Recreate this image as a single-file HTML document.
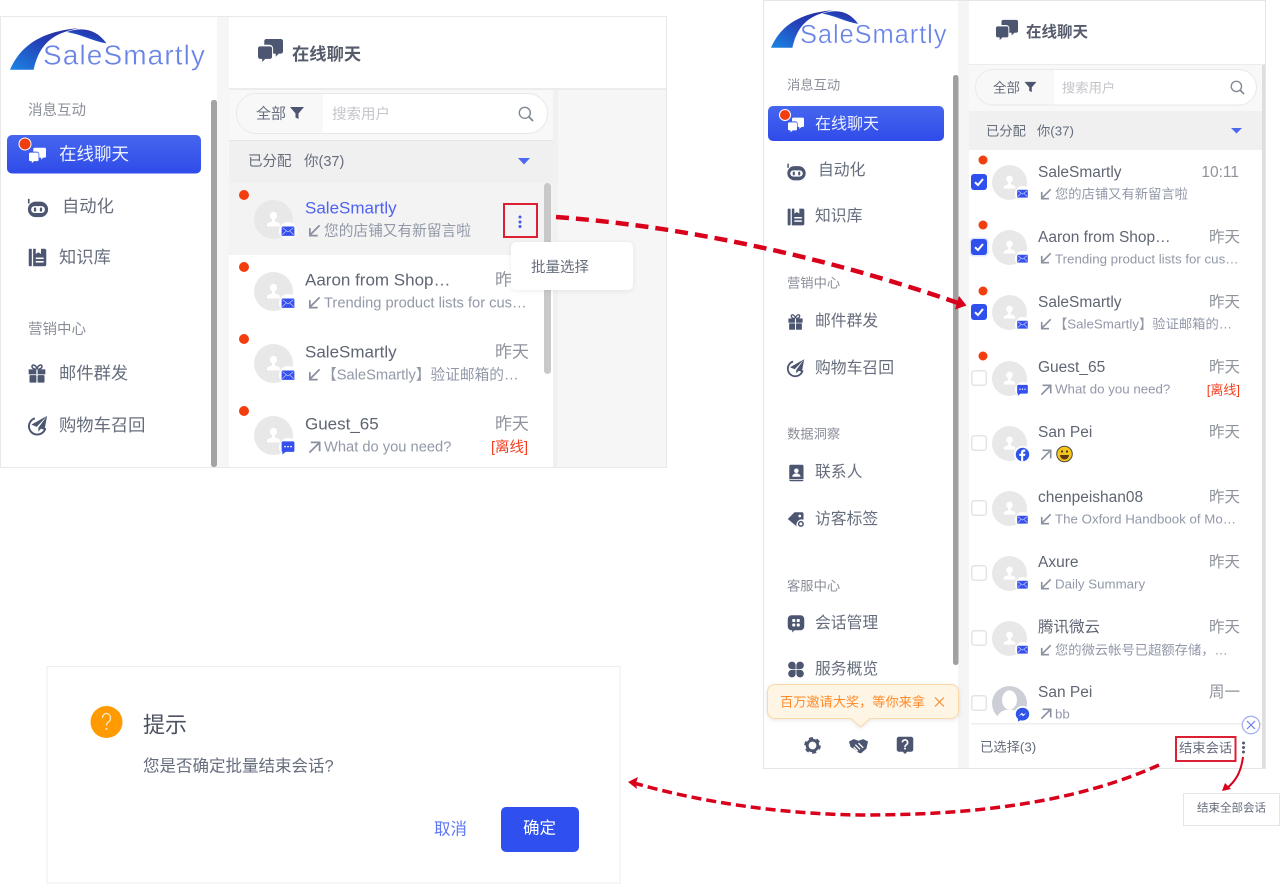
<!DOCTYPE html>
<html lang="zh-CN">
<head>
<meta charset="utf-8">
<title>SaleSmartly</title>
<style>
html,body{margin:0;padding:0;background:#fff}
#p{position:relative;width:1280px;height:884px;overflow:hidden;background:#fff;font-family:"Liberation Sans","Noto Sans CJK SC",sans-serif;color:#5d6472;filter:blur(.3px)}
#g{position:absolute;left:0;top:0}
.t{position:absolute;white-space:nowrap;line-height:1.2;transform:translateY(calc(-50% + 1.5px))}
.r{transform:translate(-100%,calc(-50% + 1.5px))}
.h{color:#8b8f99}
.m{color:#666d7c}
.n{color:#5f6572}
.s{color:#9298a8}
.d{color:#8f939c}
.a{font-size:15.5px}
.b{font-size:17.3px}
.c{font-size:13.3px}
.e{font-size:14.7px}
.o{color:#f23d1f}
.lg{color:#6a84e6;-webkit-text-stroke:.35px #fff}
.pop{position:absolute;background:#fff;border-radius:5px;box-shadow:0 1px 6px rgba(0,0,0,.08)}
</style>
</head>
<body>
<div id="p">
<svg id="g" width="1280" height="884" viewBox="0 0 1280 884" xmlns="http://www.w3.org/2000/svg">
<defs>
<linearGradient id="ar" x1="0" y1="1" x2="1" y2="0"><stop offset="0" stop-color="#1b86e4"/><stop offset=".55" stop-color="#2440b8"/><stop offset="1" stop-color="#2a2a9c"/></linearGradient>
<linearGradient id="ac" x1="0" y1="0" x2="0" y2="1"><stop offset="0" stop-color="#4666ee"/><stop offset="1" stop-color="#2f4be9"/></linearGradient>
<symbol id="logo" viewBox="0 0 110 48"><path fill="url(#ar)" d="M0 46C8 28 24 6 72 2 50 7 32 14 25 46z"/><path fill="url(#ar)" d="M60 6C78 0 92 4 102 18 88 16 74 8 60 6z"/></symbol>
<symbol id="chat" viewBox="0 0 24 24"><path d="M8 1h14a2 2 0 0 1 2 2v10a2 2 0 0 1-2 2h-2l-3 3v-3h-2.500v-5a3.500 3.500 0 0 0-3.500-3.500H6V3a2 2 0 0 1 2-2z"/><path d="M2 8h9.500a2 2 0 0 1 2 2v8a2 2 0 0 1-2 2H7l-3 3v-3H2a2 2 0 0 1-2-2v-8a2 2 0 0 1 2-2z"/></symbol>
<symbol id="robot" viewBox="0 0 24 24"><rect x="1" y="5" width="22" height="17" rx="8.500"/><rect x="4.500" y="10" width="15" height="7.500" rx="3.700" fill="#fff"/><rect x="7.500" y="11.500" width="2.500" height="4.500" rx="1"/><rect x="14" y="11.500" width="2.500" height="4.500" rx="1"/><rect x="1" y="2" width="1.800" height="5"/></symbol>
<symbol id="book" viewBox="0 0 24 24"><rect x="2" y="2" width="3.500" height="20" rx="1"/><path d="M7 2h3v6l3-2 3 2V2h4a2 2 0 0 1 2 2v16a2 2 0 0 1-2 2H7z"/><rect x="10" y="12" width="9" height="1.800" fill="#fff"/><rect x="10" y="16" width="9" height="1.800" fill="#fff"/></symbol>
<symbol id="gift" viewBox="0 0 24 24"><rect x="2" y="7" width="20" height="6"/><rect x="3" y="14" width="8.300" height="9" rx="1"/><rect x="12.700" y="14" width="8.300" height="9" rx="1"/><path d="M12 7C9 7 6 6 6 3.500S10 1 12 6c2-5 6-5 6-2.500S15 7 12 7z" fill="none" stroke="currentColor" stroke-width="1.800"/><rect x="11.200" y="7" width="1.600" height="6" fill="#fff"/></symbol>
<symbol id="plane" viewBox="0 0 24 24"><path d="M21 15A9.500 9.500 0 1 1 9 3.800" fill="none" stroke="currentColor" stroke-width="2.200"/><path d="M23 1 5 11l6 2.500L23 1zM23 1 13 14.500v4.500l3-3.500 4 1.500z"/></symbol>
<symbol id="contact" viewBox="0 0 24 24"><path d="M5 1h15a2 2 0 0 1 2 2v18a2 2 0 0 1-2 2H5a2 2 0 0 1-2-2V3a2 2 0 0 1 2-2z"/><circle cx="12.500" cy="9" r="3" fill="#fff"/><path d="M7 17c0-6 11-6 11 0z" fill="#fff"/><rect x="3" y="20" width="19" height="1" fill="#fff"/></symbol>
<symbol id="tag" viewBox="0 0 24 24"><path d="M1 12 10 3h10a2 2 0 0 1 2 2v8a7 7 0 0 0-9 9z"/><circle cx="17" cy="8" r="1.800" fill="#fff"/><circle cx="18.500" cy="18.500" r="3" fill="none" stroke="currentColor" stroke-width="2"/></symbol>
<symbol id="dlg" viewBox="0 0 24 24"><path d="M6 1h12a5 5 0 0 1 5 5v10a5 5 0 0 1-5 5h-8l-3 3v-3H6a5 5 0 0 1-5-5V6a5 5 0 0 1 5-5z"/><rect x="7" y="6" width="4" height="4" rx="1" fill="#fff"/><rect x="13" y="6" width="4" height="4" rx="1" fill="#fff"/><rect x="7" y="12" width="4" height="4" rx="1" fill="#fff"/><rect x="13" y="12" width="4" height="4" rx="1" fill="#fff"/></symbol>
<symbol id="clover" viewBox="0 0 24 24"><path d="M6.500 1.500c3 0 5 2 5 5v5h-5a5 5 0 0 1 0-10zM17.500 1.500a5 5 0 0 1 0 10h-5v-5c0-3 2-5 5-5zM6.500 22.500a5 5 0 0 1 0-10h5v5c0 3-2 5-5 5zM17.500 22.500c-3 0-5-2-5-5v-5h5a5 5 0 0 1 0 10z"/></symbol>
<symbol id="gear" viewBox="0 0 24 24"><circle cx="12" cy="12" r="7.500" fill="none" stroke="currentColor" stroke-width="4"/><circle cx="12" cy="12" r="10" fill="none" stroke="currentColor" stroke-width="3.500" stroke-dasharray="5.500 5"/></symbol>
<symbol id="hand" viewBox="0 0 24 24"><path d="M0 7l6-3 6 2 6-2 6 3-2 9-7 6-3-1-6-5-4-2z"/><path d="M8 11l6 6M6 14l5 5M12 9l6 6" stroke="#fff" stroke-width="1.600" fill="none"/></symbol>
<symbol id="ques" viewBox="0 0 24 24"><path d="M4 1h16a3 3 0 0 1 3 3v14a3 3 0 0 1-3 3h-5l-3 3-3-3H4a3 3 0 0 1-3-3V4a3 3 0 0 1 3-3z"/><path d="M8.500 8.500a3.500 3.500 0 1 1 5.500 3c-1.500 1-2 1.500-2 3" fill="none" stroke="#fff" stroke-width="2.200"/><rect x="10.800" y="15.500" width="2.400" height="2.400" fill="#fff"/></symbol>
<symbol id="av" viewBox="0 0 40 40"><circle cx="20" cy="20" r="20" fill="#e8e8e8"/><circle cx="20" cy="16" r="3.800" fill="#fff"/><path d="M18.500 19h3v3l5 2v3h-13v-3l5-2z" fill="#fff"/></symbol>
<symbol id="av2" viewBox="0 0 40 40"><circle cx="20" cy="20" r="20" fill="#ccd0d6"/><ellipse cx="20" cy="16" rx="8.500" ry="11" fill="#fff"/><path d="M5 40c1-10 8-13 15-13s14 3 15 13z" fill="#fff"/></symbol>
<symbol id="mail" viewBox="0 0 24 24"><circle cx="12" cy="12" r="12" fill="#fff"/><rect x="3.500" y="6" width="17" height="12.500" rx="1" fill="#3550ee"/><path d="M4.500 7.500 12 13l7.500-5.500M4.500 17l5-5M19.500 17l-5-5" stroke="#fff" stroke-width="1" stroke-opacity=".7" fill="none"/></symbol>
<symbol id="msg" viewBox="0 0 24 24"><circle cx="12" cy="12" r="12" fill="#fff"/><path d="M5 4.500h14a1.500 1.500 0 0 1 1.500 1.500v11a1.500 1.500 0 0 1-1.500 1.500H9l-4.500 3.500v-3.500a1.500 1.500 0 0 1-1-1.500V6A1.500 1.500 0 0 1 5 4.500z" fill="#3550ee"/><circle cx="8" cy="11.500" r="1.100" fill="#fff"/><circle cx="12" cy="11.500" r="1.100" fill="#fff"/><circle cx="16" cy="11.500" r="1.100" fill="#fff"/></symbol>
<symbol id="fb" viewBox="0 0 24 24"><circle cx="12" cy="12" r="12" fill="#fff"/><circle cx="12" cy="12" r="9.500" fill="#2f55e8"/><path d="M13 21.500V14h2.600l.4-3h-3V9.500c0-1 .4-1.500 1.500-1.500H16V5.300c-3.500-.6-6 .3-6 3.900V11H7.500v3H10v7.500z" fill="#fff"/></symbol>
<symbol id="mes" viewBox="0 0 24 24"><circle cx="12" cy="12" r="12" fill="#fff"/><path d="M12 2.500c-5.500 0-9.500 4-9.500 9 0 2.800 1.200 5 3.200 6.700V22l3.300-1.900c1 .3 2 .4 3 .4 5.500 0 9.500-4 9.500-9s-4-9-9.500-9z" fill="#2f55e8"/><path d="M6.500 14.500 11 9.500l2.500 2.500 4-2.500-4.500 5-2.500-2.500z" fill="#fff"/></symbol>
<symbol id="in" viewBox="0 0 14 14"><path d="M12.500 1.500 2 12M2 4.500V12.500H10.500" fill="none" stroke="currentColor" stroke-width="1.900"/></symbol>
<symbol id="out" viewBox="0 0 14 14"><path d="M1.500 12.500 12 2M3 1.500H12.500V11" fill="none" stroke="currentColor" stroke-width="1.900"/></symbol>
<symbol id="chk" viewBox="0 0 16 16"><rect width="16" height="16" rx="3" fill="#3050ee"/><path d="M4 8.300 7 11l5-6" fill="none" stroke="#fff" stroke-width="2"/></symbol>
<symbol id="unc" viewBox="0 0 16 16"><rect x=".75" y=".75" width="14.500" height="14.500" rx="2.500" fill="#fff" stroke="#e4e4e4" stroke-width="1.500"/></symbol>
<symbol id="fun" viewBox="0 0 14 14"><path d="M0 1h14L8.500 7.500V13l-3-1.500v-4z"/></symbol>
<symbol id="mag" viewBox="0 0 16 16"><circle cx="6.800" cy="6.800" r="5.500" fill="none" stroke="currentColor" stroke-width="1.400"/><path d="m10.800 10.800 4.200 4.200" stroke="currentColor" stroke-width="1.800"/></symbol>
</defs>

<!-- LEFT PANEL -->
<rect x="0.500" y="16.500" width="666" height="451" fill="#f6f6f6" stroke="#e9e9e9"/>
<rect x="1" y="17" width="216" height="450" fill="#fff"/>
<rect x="211" y="100" width="6" height="367" rx="2.500" fill="#a3a3a3"/>
<rect x="229" y="17" width="437" height="71" fill="#fff"/>
<rect x="229" y="88" width="437" height="2" fill="#ececec"/>
<rect x="229" y="90" width="324" height="377" fill="#fff"/>
<rect x="229" y="90" width="324" height="50" fill="#f8f8f8"/>
<rect x="236.500" y="93.500" width="311" height="40" rx="20" fill="#fff" stroke="#e8e8e8"/>
<path d="M323 94H256.500a19.500 19.500 0 0 0 0 39H323z" fill="#f8f8f8"/>
<rect x="229" y="140" width="324" height="1" fill="#e6e6e6"/>
<rect x="229" y="141" width="324" height="42" fill="#f0f0f0"/>
<rect x="229" y="183" width="324" height="72" fill="#f3f3f3"/>
<rect x="553" y="90" width="5" height="377" fill="#f1f1f1"/>
<rect x="544" y="183" width="7" height="191" rx="3.500" fill="#c9c9c9"/>
<use href="#logo" x="10" y="26" width="104" height="46"/>
<rect x="7" y="135" width="194" height="38.500" rx="5" fill="url(#ac)"/>
<use href="#chat" x="28" y="147" width="19" height="17" fill="#fff" color="#fff"/>
<circle cx="25" cy="144" r="6.500" fill="#fff"/><circle cx="25" cy="144" r="5.500" fill="#f23d0f"/>
<g fill="#4d5670" color="#4d5670">
<use href="#robot" x="27" y="197" width="22" height="22"/>
<use href="#book" x="27" y="247" width="21" height="21"/>
<use href="#gift" x="27" y="363" width="20" height="21"/>
<use href="#plane" x="27" y="415" width="21" height="21"/>
<use href="#chat" x="257" y="38" width="27" height="25"/>
<use href="#fun" x="290" y="106" width="14" height="14"/>
</g>
<use href="#mag" x="518" y="106" width="16" height="16" color="#7f8794"/>
<path d="M518 158h12l-6 6.500z" fill="#4c68f0"/>
<g fill="#f23d0f"><circle cx="244" cy="195" r="5"/><circle cx="244" cy="267" r="5"/><circle cx="244" cy="339" r="5"/><circle cx="244" cy="411" r="5"/></g>
<use href="#av" x="254" y="200" width="39" height="39"/>
<use href="#av" x="254" y="272" width="39" height="39"/>
<use href="#av" x="254" y="344" width="39" height="39"/>
<use href="#av" x="254" y="416" width="39" height="39"/>
<use href="#mail" x="279" y="222" width="18" height="18"/>
<use href="#mail" x="279" y="294" width="18" height="18"/>
<use href="#mail" x="279" y="366" width="18" height="18"/>
<use href="#msg" x="279" y="438" width="18" height="18"/>
<g color="#8a90a0">
<use href="#in" x="308" y="224" width="13" height="13"/>
<use href="#in" x="308" y="296" width="13" height="13"/>
<use href="#in" x="308" y="368" width="13" height="13"/>
<use href="#out" x="308" y="441" width="13" height="13"/>
</g>
<rect x="504" y="204" width="33" height="33" fill="none" stroke="#dc1f33" stroke-width="2"/>
<g fill="#3f59ee"><circle cx="520" cy="217" r="1.500"/><circle cx="520" cy="222" r="1.500"/><circle cx="520" cy="226.500" r="1.500"/></g>

<!-- RIGHT PANEL -->
<rect x="763.500" y="0.500" width="502" height="768" fill="#f5f5f5" stroke="#e6e6e6"/>
<rect x="764" y="1" width="194" height="767" fill="#fff"/>
<rect x="953" y="75" width="5.500" height="590" rx="2.500" fill="#a0a0a0"/>
<rect x="969" y="1" width="296" height="63" fill="#fff"/>
<rect x="969" y="64" width="296" height="1.500" fill="#ececec"/>
<rect x="969" y="65" width="293" height="703" fill="#fff"/>
<rect x="1262" y="65" width="3" height="703" fill="#dedede"/>
<rect x="969" y="65" width="293" height="46" fill="#f8f8f8"/>
<rect x="975.500" y="69.500" width="281" height="35.500" rx="17.700" fill="#fff" stroke="#e8e8e8"/>
<path d="M1054 70H993a17 17 0 0 0 0 34.500h61z" fill="#f8f8f8"/>
<rect x="969" y="111" width="293" height="39" fill="#f0f0f0"/>
<use href="#logo" x="771" y="8" width="94" height="42"/>
<rect x="768" y="106" width="176" height="35" rx="5" fill="url(#ac)"/>
<use href="#chat" x="787" y="117" width="18" height="16" fill="#fff" color="#fff"/>
<circle cx="785" cy="115" r="6" fill="#fff"/><circle cx="785" cy="115" r="5" fill="#f23d0f"/>
<g fill="#4d5670" color="#4d5670">
<use href="#robot" x="786" y="162" width="21" height="20"/>
<use href="#book" x="786" y="207" width="20" height="20"/>
<use href="#gift" x="787" y="313" width="17" height="18"/>
<use href="#plane" x="786" y="358" width="19" height="20"/>
<use href="#contact" x="787" y="463" width="18" height="20"/>
<use href="#tag" x="787" y="510" width="18" height="18"/>
<use href="#dlg" x="787" y="614" width="18" height="19"/>
<use href="#clover" x="787" y="660" width="18" height="19"/>
<use href="#gear" x="804" y="737" width="17" height="17"/>
<use href="#hand" x="848" y="736" width="21" height="19"/>
<use href="#ques" x="896" y="736" width="18" height="18"/>
<use href="#chat" x="995" y="19" width="24" height="22"/>
<use href="#fun" x="1024" y="81" width="13" height="12"/>
</g>
<use href="#mag" x="1230" y="80" width="15" height="15" color="#7f8794"/>
<path d="M1231 128h11l-5.500 5.500z" fill="#4c68f0"/>
<g fill="#f23d0f"><circle cx="983" cy="160" r="4.500"/><circle cx="983" cy="225" r="4.500"/><circle cx="983" cy="291" r="4.500"/><circle cx="983" cy="356" r="4.500"/></g>
<use href="#chk" x="971" y="174" width="16" height="16"/>
<rect x="969.500" y="237.500" width="19" height="19" rx="4" fill="#dfe4ff"/>
<use href="#chk" x="971" y="239" width="16" height="16"/>
<use href="#chk" x="971" y="304" width="16" height="16"/>
<use href="#unc" x="971" y="370" width="16" height="16"/>
<use href="#unc" x="971" y="435" width="16" height="16"/>
<use href="#unc" x="971" y="500" width="16" height="16"/>
<use href="#unc" x="971" y="565" width="16" height="16"/>
<use href="#unc" x="971" y="630" width="16" height="16"/>
<use href="#unc" x="971" y="695" width="16" height="16"/>
<use href="#av" x="992" y="165" width="35" height="35"/>
<use href="#av" x="992" y="230" width="35" height="35"/>
<use href="#av" x="992" y="295" width="35" height="35"/>
<use href="#av" x="992" y="361" width="35" height="35"/>
<use href="#av" x="992" y="426" width="35" height="35"/>
<use href="#av" x="992" y="491" width="35" height="35"/>
<use href="#av" x="992" y="556" width="35" height="35"/>
<use href="#av" x="992" y="621" width="35" height="35"/>
<use href="#av2" x="992" y="686" width="35" height="35"/>
<use href="#mail" x="1015" y="186" width="15" height="15"/>
<use href="#mail" x="1015" y="251" width="15" height="15"/>
<use href="#mail" x="1015" y="317" width="15" height="15"/>
<use href="#msg" x="1015" y="382" width="15" height="15"/>
<use href="#fb" x="1014" y="446" width="17" height="17"/>
<use href="#mail" x="1015" y="512" width="15" height="15"/>
<use href="#mail" x="1015" y="577" width="15" height="15"/>
<use href="#mail" x="1015" y="642" width="15" height="15"/>
<use href="#mes" x="1014" y="706" width="17" height="17"/>
<g color="#8a90a0">
<use href="#in" x="1040" y="188" width="12" height="12"/>
<use href="#in" x="1040" y="252" width="12" height="12"/>
<use href="#in" x="1040" y="318" width="12" height="12"/>
<use href="#out" x="1040" y="384" width="12" height="12"/>
<use href="#out" x="1040" y="449" width="12" height="12"/>
<use href="#in" x="1040" y="513" width="12" height="12"/>
<use href="#in" x="1040" y="578" width="12" height="12"/>
<use href="#in" x="1040" y="644" width="12" height="12"/>
<use href="#out" x="1040" y="708" width="12" height="12"/>
</g>
<circle cx="1064.500" cy="454" r="7.800" fill="#f5c518" stroke="#4a4a4a" stroke-width="1"/>
<circle cx="1062" cy="451.500" r="1.100" fill="#333"/><circle cx="1067" cy="451.500" r="1.100" fill="#333"/>
<path d="M1060 455h9a4.500 4.500 0 0 1-9 0z" fill="#5a3a1a"/>
<rect x="969" y="724" width="293" height="44" fill="#fff"/>
<rect x="971" y="723" width="291" height="1.500" fill="#eeeeee"/>
<rect x="1176" y="737" width="59.500" height="24" fill="none" stroke="#dc1f33" stroke-width="2"/>
<g fill="#555c6e"><circle cx="1243.500" cy="743" r="1.500"/><circle cx="1243.500" cy="747.500" r="1.500"/><circle cx="1243.500" cy="752" r="1.500"/></g>
<circle cx="1251" cy="725" r="8.700" fill="#fff" stroke="#a9b2f3" stroke-width="1.300"/>
<path d="m1247 721 8 8m0-8-8 8" stroke="#6d7eee" stroke-width="1.200"/>
<!-- tip -->
<path d="M775 684.500h176a7.500 7.500 0 0 1 7.500 7.500v19a7.500 7.500 0 0 1-7.500 7.500H870l-9.500 8.500-9.500-8.500H775a7.500 7.500 0 0 1-7.500-7.500v-19a7.500 7.500 0 0 1 7.500-7.500z" fill="#fff5e4" stroke="#fbd8a8" style="filter:drop-shadow(0 1px 2px rgba(0,0,0,.1))"/>
<path d="m935 697.500 9 9m0-9-9 9" stroke="#f58d33" stroke-width="1.200"/>
<!-- outside popup -->
<rect x="1183.500" y="793.500" width="96" height="32" fill="#fff" stroke="#e6e6e6"/>
<!-- dialog -->
<rect x="47" y="666.500" width="573" height="216.500" fill="#fff" stroke="#eeeeee"/>
<circle cx="106.500" cy="722" r="16" fill="#ff9b00"/>
<path d="M102.500 718a4 4.500 0 1 1 6.500 3.500c-1.600 1.300-2.500 2-2.500 4" fill="none" stroke="#ffe9c6" stroke-width="1.300"/>
<circle cx="106.500" cy="729" r="1" fill="#ffe9c6"/>
<rect x="501" y="807" width="78" height="45" rx="5" fill="#2f50ef"/>
<!-- arrows -->
<path d="M556 217C680 226 820 255 958 303" fill="none" stroke="#d9001b" stroke-width="4.500" stroke-dasharray="13 7"/>
<path d="M966.500 305.500 955 309.500 959 296z" fill="#d9001b"/>
<path d="M1159 765C1060 810 940 815 860 815 780 814 700 802 634 783" fill="none" stroke="#d9001b" stroke-width="3.500" stroke-dasharray="10 5"/>
<path d="M628 782 638 777 636 783 637 789z" fill="#d9001b"/>
<path d="M1243 757C1241 772 1236 781 1226 789" fill="none" stroke="#d9001b" stroke-width="2"/>
<path d="M1222 791 1225 783 1231 789z" fill="#d9001b"/>
</svg>

<!-- left text -->
<div class="t lg" style="left:43px;top:54px;font-size:28px;letter-spacing:1.100px">SaleSmartly</div>
<div class="t h" style="left:28px;top:110px;font-size:14.500px">消息互动</div>
<div class="t" style="left:59px;top:153px;font-size:17.500px;color:#eef1ff">在线聊天</div>
<div class="t m" style="left:62px;top:205px;font-size:17.300px">自动化</div>
<div class="t m" style="left:59px;top:256px;font-size:17.300px">知识库</div>
<div class="t h" style="left:28px;top:329px;font-size:14.500px">营销中心</div>
<div class="t m" style="left:59px;top:372px;font-size:17.300px">邮件群发</div>
<div class="t m" style="left:59px;top:424px;font-size:17.300px">购物车召回</div>
<div class="t" style="left:292px;top:53px;font-size:17.300px;font-weight:bold;color:#555b6b">在线聊天</div>
<div class="t m" style="left:256px;top:113px;font-size:15px">全部</div>
<div class="t" style="left:332px;top:114px;font-size:14.500px;color:#c3c5ca">搜索用户</div>
<div class="t m" style="left:248px;top:161px;font-size:14.500px">已分配</div>
<div class="t m" style="left:304px;top:161px;font-size:14.500px">你(37)</div>
<div class="t b" style="left:305px;top:207px;font-size:17px;color:#4f62f0">SaleSmartly</div>
<div class="t e s" style="left:324px;top:231px">您的店铺又有新留言啦</div>
<div class="t b n" style="left:305px;top:279px;font-size:17px">Aaron from Shop…</div>
<div class="t e s" style="left:324px;top:303px">Trending product lists for cus…</div>
<div class="t b n" style="left:305px;top:351px;font-size:17px">SaleSmartly</div>
<div class="t e s" style="left:322px;top:375px">【SaleSmartly】验证邮箱的…</div>
<div class="t b n" style="left:305px;top:423px;font-size:17px">Guest_65</div>
<div class="t e s" style="left:324px;top:447px">What do you need?</div>
<div class="t d" style="left:495px;top:279px;font-size:17px">昨天</div>
<div class="t d" style="left:495px;top:351px;font-size:17px">昨天</div>
<div class="t d" style="left:495px;top:423px;font-size:17px">昨天</div>
<div class="t o" style="left:491px;top:447px;font-size:14.500px">[离线]</div>
<div class="pop" style="left:511px;top:242px;width:122px;height:48px"></div>
<div class="t m" style="left:531px;top:267px;font-size:14.500px">批量选择</div>

<!-- right text -->
<div class="t lg" style="left:800px;top:34px;font-size:25.500px;letter-spacing:.9px">SaleSmartly</div>
<div class="t h" style="left:787px;top:84px;font-size:13.300px">消息互动</div>
<div class="t" style="left:815px;top:123px;font-size:16px;color:#eef1ff">在线聊天</div>
<div class="t m" style="left:818px;top:170px;font-size:15.800px">自动化</div>
<div class="t m" style="left:815px;top:216px;font-size:15.800px">知识库</div>
<div class="t h" style="left:787px;top:282px;font-size:13.300px">营销中心</div>
<div class="t m" style="left:815px;top:321px;font-size:15.800px">邮件群发</div>
<div class="t m" style="left:815px;top:368px;font-size:15.800px">购物车召回</div>
<div class="t h" style="left:787px;top:433px;font-size:13.300px">数据洞察</div>
<div class="t m" style="left:815px;top:472px;font-size:15.800px">联系人</div>
<div class="t m" style="left:815px;top:519px;font-size:15.800px">访客标签</div>
<div class="t h" style="left:787px;top:585px;font-size:13.300px">客服中心</div>
<div class="t m" style="left:815px;top:623px;font-size:15.800px">会话管理</div>
<div class="t m" style="left:815px;top:669px;font-size:15.800px">服务概览</div>
<div class="t" style="left:780px;top:701px;font-size:13.200px;color:#ff8a2a">百万邀请大奖，等你来拿</div>
<div class="t" style="left:1026px;top:32px;font-size:15.500px;font-weight:bold;color:#555b6b">在线聊天</div>
<div class="t m" style="left:993px;top:87px;font-size:13.500px">全部</div>
<div class="t" style="left:1062px;top:87px;font-size:13.300px;color:#c3c5ca">搜索用户</div>
<div class="t m" style="left:986px;top:130px;font-size:13.300px">已分配</div>
<div class="t m" style="left:1037px;top:130px;font-size:13.300px">你(37)</div>

<div class="t a n" style="left:1038px;top:172px">SaleSmartly</div>
<div class="t c s" style="left:1055px;top:193px">您的店铺又有新留言啦</div>
<div class="t a d r" style="left:1239px;top:172px">10:11</div>
<div class="t a n" style="left:1038px;top:237px">Aaron from Shop…</div>
<div class="t c s" style="left:1055px;top:258px">Trending product lists for cus…</div>
<div class="t a d r" style="left:1240px;top:237px">昨天</div>
<div class="t a n" style="left:1038px;top:302px">SaleSmartly</div>
<div class="t c s" style="left:1054px;top:323px">【SaleSmartly】验证邮箱的…</div>
<div class="t a d r" style="left:1240px;top:302px">昨天</div>
<div class="t a n" style="left:1038px;top:367px">Guest_65</div>
<div class="t c s" style="left:1055px;top:388px">What do you need?</div>
<div class="t a d r" style="left:1240px;top:367px">昨天</div>
<div class="t o r" style="left:1240px;top:389px;font-size:13px">[离线]</div>
<div class="t a n" style="left:1038px;top:432px">San Pei</div>
<div class="t a d r" style="left:1240px;top:432px">昨天</div>
<div class="t a n" style="left:1038px;top:497px">chenpeishan08</div>
<div class="t c s" style="left:1055px;top:518px">The Oxford Handbook of Mo…</div>
<div class="t a d r" style="left:1240px;top:497px">昨天</div>
<div class="t a n" style="left:1038px;top:562px">Axure</div>
<div class="t c s" style="left:1055px;top:583px">Daily Summary</div>
<div class="t a d r" style="left:1240px;top:562px">昨天</div>
<div class="t a n" style="left:1038px;top:627px">腾讯微云</div>
<div class="t c s" style="left:1055px;top:649px">您的微云帐号已超额存储，…</div>
<div class="t a d r" style="left:1240px;top:627px">昨天</div>
<div class="t a n" style="left:1038px;top:692px">San Pei</div>
<div class="t c s" style="left:1055px;top:713px">bb</div>
<div class="t a d r" style="left:1240px;top:692px">周一</div>
<div class="t m" style="left:980px;top:746px;font-size:13.300px">已选择(3)</div>
<div class="t m" style="left:1179px;top:747px;font-size:13.300px">结束会话</div>
<div class="t m" style="left:1197px;top:808px;font-size:11.500px">结束全部会话</div>

<!-- dialog text -->
<div class="t" style="left:143px;top:724px;font-size:22px;color:#4a5160">提示</div>
<div class="t m" style="left:143px;top:766px;font-size:16.500px">您是否确定批量结束会话?</div>
<div class="t" style="left:434px;top:829px;font-size:16.500px;color:#5f78f5">取消</div>
<div class="t" style="left:523px;top:828px;font-size:16.500px;color:#fff">确定</div>
</div>
</body>
</html>
